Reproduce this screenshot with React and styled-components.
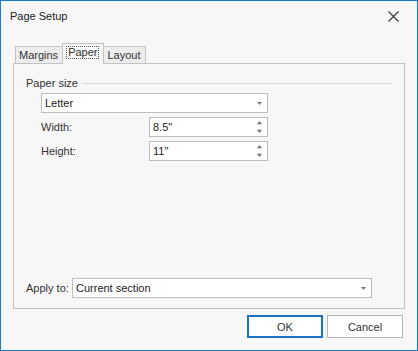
import React from 'react'
import styled, { createGlobalStyle } from 'styled-components'

const GlobalStyle = createGlobalStyle`
  html, body {
    margin: 0;
    padding: 0;
    background: #f7f7f7;
  }
  body {
    font-family: "Segoe UI", "Liberation Sans", Arial, sans-serif;
    font-size: 11px;
    color: #333;
  }
`

const Dialog = styled.div`
  box-sizing: border-box;
  width: 418px;
  height: 351px;
  border: 1px solid #1979ca;
  background: #f7f7f7;
  display: flex;
  flex-direction: column;
`

const TitleBar = styled.div`
  height: 30px;
  display: flex;
  align-items: center;
  justify-content: space-between;
  padding: 0 18px 0 9px;
`

const Title = styled.span`
  font-size: 11px;
  color: #222;
`

const Body = styled.div`
  flex: 1;
  display: flex;
  flex-direction: column;
  padding: 12px 12px 12px 12px;
`

const TabStrip = styled.div`
  display: flex;
  align-items: flex-end;
  height: 21px;
  padding-left: 2px;
  margin-bottom: -1px;
  position: relative;
  z-index: 1;
`

const Tab = styled.div`
  box-sizing: border-box;
  height: ${(p) => (p.$active ? '21px' : '18px')};
  padding: 0 4px 0 3px;
  display: flex;
  align-items: center;
  justify-content: center;
  border: 1px solid #c3c3c3;
  border-bottom: ${(p) => (p.$active ? 'none' : '1px solid #c3c3c3')};
  border-left: ${(p) => (p.$first || p.$active ? '1px solid #c3c3c3' : 'none')};
  border-right: ${(p) => (p.$beforeActive ? 'none' : '1px solid #c3c3c3')};
  background: ${(p) => (p.$active ? '#f7f7f7' : '#ededed')};
  color: #333;
  padding-bottom: ${(p) => (p.$active ? '3px' : '0')};
`

const Focus = styled.span`
  border: 1px dotted #555;
  padding: 0 1px;
  line-height: 11px;
`

const Panel = styled.div`
  flex: 1;
  display: flex;
  flex-direction: column;
  border: 1px solid #c3c3c3;
  padding: 11px 12px 10px 12px;
`

const GroupHeader = styled.div`
  display: flex;
  align-items: center;
  height: 16px;
`

const GroupLine = styled.div`
  flex: 1;
  height: 1px;
  margin-left: 4px;
  background: #dadada;
`

const GroupBody = styled.div`
  display: flex;
  flex-direction: column;
  gap: 4px;
  margin: 2px 0 0 15px;
`

const Field = styled.div`
  box-sizing: border-box;
  width: ${(p) => p.$w}px;
  height: 20px;
  display: flex;
  align-items: center;
  background: #fff;
  border: 1px solid #bdbdbd;
  padding-left: 3px;
  color: #222;
`

const FieldText = styled.span`
  flex: 1;
`

const ButtonArea = styled.div`
  width: 16px;
  height: 100%;
  display: flex;
  flex-direction: column;
  align-items: center;
  justify-content: center;
  gap: 4px;
`

const Row = styled.div`
  display: flex;
  align-items: center;
`

const Label = styled.span`
  width: ${(p) => p.$w}px;
  color: #333;
`

const ApplyRow = styled(Row)`
  margin-top: auto;
`

const Footer = styled.div`
  display: flex;
  justify-content: flex-end;
  gap: 4px;
  padding: 6px 2px 0 0;
`

const Button = styled.button`
  box-sizing: border-box;
  width: 76px;
  height: 23px;
  background: #fff;
  border: ${(p) => (p.$default ? '2px solid #1c72c4' : '1px solid #b4b4b4')};
  font-family: inherit;
  font-size: 11px;
  color: #333;
  padding: 0;
`

const DropArrow = () => (
  <svg width="5" height="3" viewBox="0 0 5 3">
    <path d="M0 0H5L2.5 3Z" fill="#7a7a7a" />
  </svg>
)

const SpinArrows = () => (
  <>
    <svg width="5" height="4" viewBox="0 0 5 4">
      <path d="M0 3L2.5 0L5 3Z" fill="#7a7a7a" />
      <rect x="0" y="3.4" width="5" height="0.6" fill="#bbb" />
    </svg>
    <svg width="5" height="4" viewBox="0 0 5 4">
      <rect x="0" y="0" width="5" height="0.6" fill="#bbb" />
      <path d="M0 1H5L2.5 4Z" fill="#7a7a7a" />
    </svg>
  </>
)

const Combo = ({ w, value }) => (
  <Field $w={w}>
    <FieldText>{value}</FieldText>
    <ButtonArea>
      <DropArrow />
    </ButtonArea>
  </Field>
)

const Spin = ({ w, value }) => (
  <Field $w={w}>
    <FieldText>{value}</FieldText>
    <ButtonArea>
      <SpinArrows />
    </ButtonArea>
  </Field>
)

const CloseIcon = () => (
  <svg width="11" height="11" viewBox="0 0 11 11">
    <path d="M0.5 0.5L10.5 10.5M10.5 0.5L0.5 10.5" stroke="#333" strokeWidth="1.1" />
  </svg>
)

const App = () => {
  return (
    <>
      <GlobalStyle />
      <Dialog>
        <TitleBar>
          <Title>Page Setup</Title>
          <CloseIcon />
        </TitleBar>
        <Body>
          <TabStrip>
            <Tab $first $beforeActive>Margins</Tab>
            <Tab $active>
              <Focus>Paper</Focus>
            </Tab>
            <Tab>Layout</Tab>
          </TabStrip>
          <Panel>
            <GroupHeader>
              <span>Paper size</span>
              <GroupLine />
            </GroupHeader>
            <GroupBody>
              <Combo w={227} value="Letter" />
              <Row>
                <Label $w={108}>Width:</Label>
                <Spin w={119} value={'8.5"'} />
              </Row>
              <Row>
                <Label $w={108}>Height:</Label>
                <Spin w={119} value={'11"'} />
              </Row>
            </GroupBody>
            <ApplyRow>
              <Label $w={46}>Apply to:</Label>
              <Combo w={300} value="Current section" />
            </ApplyRow>
          </Panel>
          <Footer>
            <Button $default>OK</Button>
            <Button>Cancel</Button>
          </Footer>
        </Body>
      </Dialog>
    </>
  )
}

export default App
